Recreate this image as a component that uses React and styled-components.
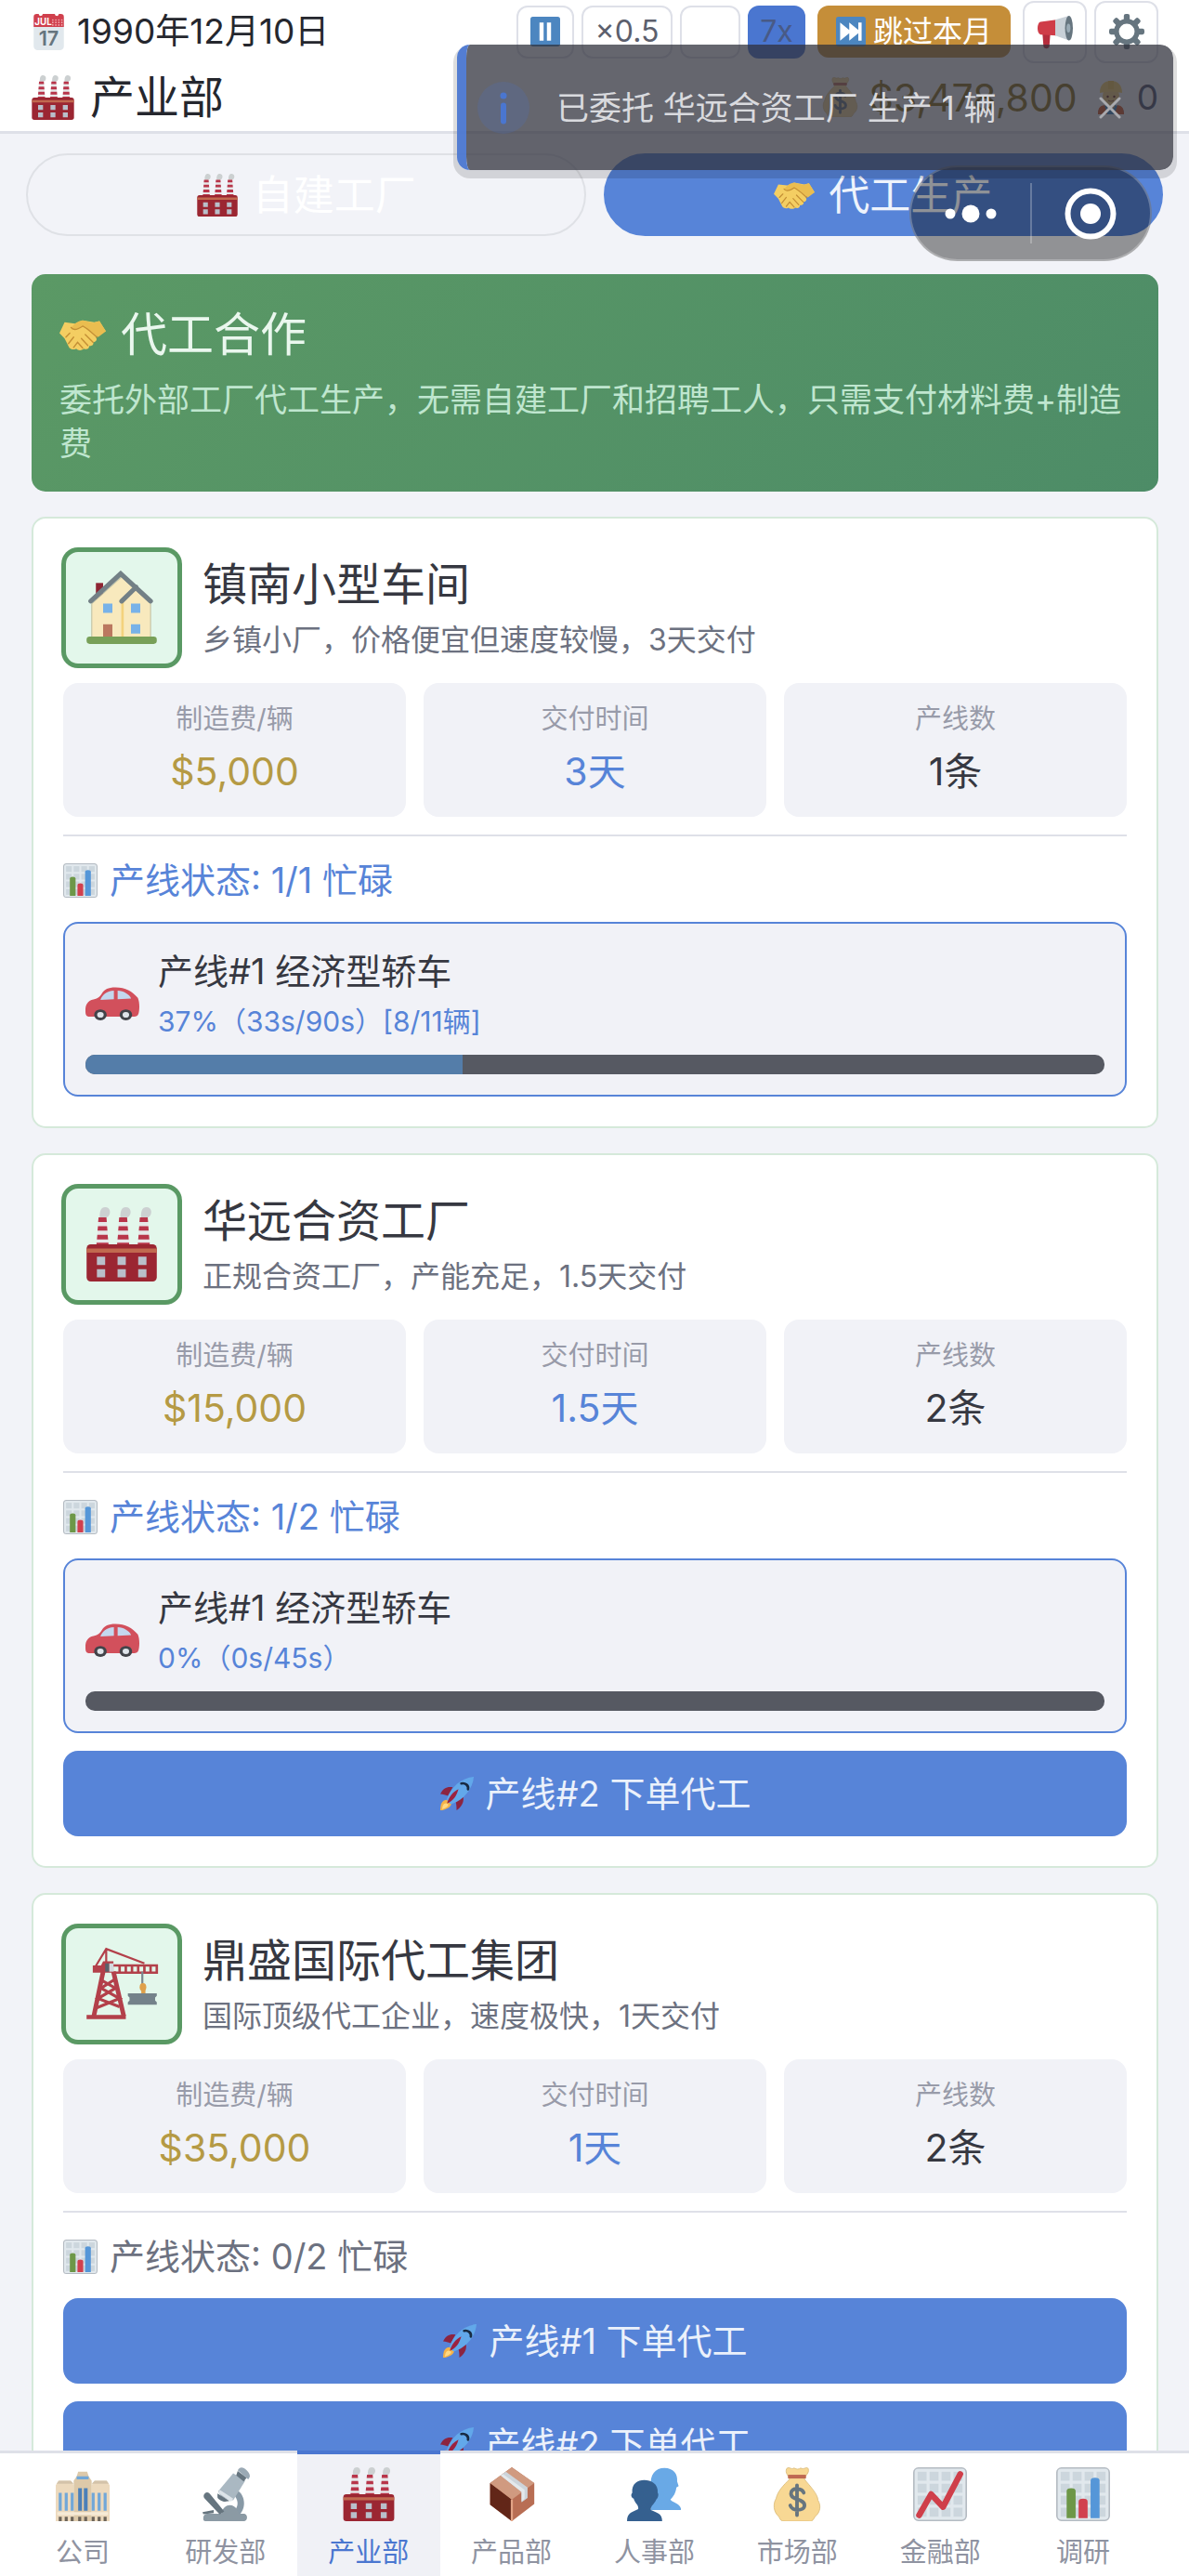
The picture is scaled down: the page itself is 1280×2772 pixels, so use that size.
import React from "react";
import styled, { createGlobalStyle } from "styled-components";

const GlobalStyle = createGlobalStyle`
  * { box-sizing: border-box; }
  body { margin: 0; background: #f2f3f8; }
  body, button {
    font-family: Inter, "Noto Sans CJK SC", sans-serif;
    font-weight: 400;
  }
  h1, h2, p, dl, dt, dd { margin: 0; font-weight: 400; }
  button { cursor: pointer; }
`;

const color = {
  ink: "#25272e",
  heading: "#363841",
  muted: "#6c7180",
  faint: "#989ba9",
  line: "#dee0e8",
  blue: "#5784d8",
  deepBlue: "#4a76d0",
  green: "#5a9964",
  gold: "#b59a44",
  panel: "#f1f2f7",
  white: "#ffffff",
};

/* ---------- icons ---------- */

const Svg = styled.svg`
  display: block;
  flex: none;
  width: ${(p) => p.$size}px;
  height: ${(p) => p.$size}px;
`;

const art = {
  calendar: (
    <>
      <path d="M3 11h30v21a4 4 0 0 1-4 4H7a4 4 0 0 1-4-4z" fill="#e1e8ed" />
      <path d="M3 3a3 3 0 0 1 3-3h2a2 2 0 0 0 4 0h12a2 2 0 0 0 4 0h2a3 3 0 0 1 3 3v10H3z" fill="#d0404d" />
      <text x="4" y="11" fontSize="9" fontWeight="700" fill="#fff" fontFamily="Inter, sans-serif">JUL</text>
      <g fill="#f0a9ae">
        {[22, 25, 28, 31].map((x) => [6, 8.5, 11].map((y) => <circle key={x + "-" + y} cx={x} cy={y} r=".8" />))}
      </g>
      <text x="18" y="31" fontSize="20" fontWeight="600" textAnchor="middle" fill="#66757f" fontFamily="Inter, sans-serif">17</text>
    </>
  ),
  factory: (
    <>
      {[6, 16, 26].map((x) => (
        <g key={x}>
          <path d={`M${x + 1.5} 6C${x + 1} 2 ${x + 2} 0 ${x + 4} 0c2.5 0 3 3 1.500 4.500-1 .8-2 .5-2.300 1.800z`} fill="#ccd0d1" />
          <path d={`M${x + 0.8} 5h3.800l1.100 14h-6z`} fill="#e6e7e8" />
          <path d={`M${x + 0.8} 5h3.800l.2 2.200h-4.200zM${x + 0.5} 9.200h4.400l.2 2.200h-4.800zM${x + 0.2} 13.400h5l.2 2.200h-5.400zM${x - 0.2} 17.200h5.800v2h-5.800z`} fill="#b8354a" />
        </g>
      ))}
      <path d="M1 20a2 2 0 0 1 2-2h30a2 2 0 0 1 2 2v14a2 2 0 0 1-2 2H3a2 2 0 0 1-2-2z" fill="#9b2632" />
      <path d="M1 20h34v2H1z" fill="#c1694f" />
      <path d="M6 24h4v4H6zM16 24h4v4h-4zM26 24h4v4h-4zM6 30h4v4H6zM16 30h4v4h-4zM26 30h4v4h-4z" fill="#b9bfca" />
    </>
  ),
  pause: (
    <>
      <rect width="36" height="36" rx="3" fill="#4c86c0" />
      <path d="M11 7h5v22h-5zM20 7h5v22h-5z" fill="#fff" />
    </>
  ),
  skip: (
    <>
      <rect width="36" height="36" rx="3" fill="#4c86c0" />
      <path d="M5 7l11 9V7l11 9V7h4v22h-4v-9l-11 9v-9L5 29z" fill="#fff" />
    </>
  ),
  horn: (
    <>
      <path d="M5 20h8l-1 13c0 3-6 3-6 0z" fill="#b52d3d" />
      <path d="M3 8l16-2v16L3 21c-4-1-4-12 0-13z" fill="#cf3c48" />
      <path d="M18 6L32 2v25l-14-5z" fill="#c8d0d7" />
      <ellipse cx="32" cy="14.500" rx="4" ry="12.500" fill="#66757f" />
      <ellipse cx="31.500" cy="14.500" rx="2" ry="4.500" fill="#99aab5" />
    </>
  ),
  gear: (
    <>
      <g fill="#66757f">
        {[0, 45, 90, 135, 180, 225, 270, 315].map((a) => (
          <rect key={a} x="15" y="0" width="6" height="9" rx="2" transform={`rotate(${a} 18 18)`} />
        ))}
      </g>
      <circle cx="18" cy="18" r="10.500" fill="none" stroke="#66757f" strokeWidth="5" />
    </>
  ),
  money: (
    <>
      <path d="M11 1c2-2 3 1 5-.5 2 1 3 1 4.500 0 2 1.500 4-1.500 5 .5 1 3-2 4-2.500 7 4 5 9 10 9 14 2 3 2 8-2 11-2 4-3 3-5 3H11c-3 0-4 0-5-3-4-3-4-9-2-12 1-5 5-9 9-13-1-3-3-4-2-7z" fill="#f8d894" stroke="#d8b978" strokeWidth=".5" />
      <path d="M12 5h12v2.500H12z" fill="#bf6952" />
      <path d="M22.500 17c-1-3-8.500-4-8.500.5 0 5 9 3 9 8 0 4-8.500 4-9.500 0M18 12v20" fill="none" stroke="#67757f" strokeWidth="2.400" strokeLinecap="round" />
    </>
  ),
  worker: (
    <>
      <path d="M4 36c0-8 5-10 14-10s14 2 14 10z" fill="#3b88c3" />
      <path d="M4 36c0-8 3-9 7-10l3 10zM32 36c0-8-3-9-7-10l-3 10z" fill="#dd551f" />
      <path d="M14 22h8v6c-2 3-6 3-8 0z" fill="#eabb77" />
      <ellipse cx="18" cy="16" rx="9" ry="10" fill="#f7ce76" />
      <path d="M6 13C6 4 11 0 18 0s12 4 12 13c-8-2-16-2-24 0z" fill="#ffd566" />
      <path d="M15 0h6v9h-6z" fill="#f5c850" />
      <circle cx="14.500" cy="17" r="1.200" fill="#662113" />
      <circle cx="21.500" cy="17" r="1.200" fill="#662113" />
      <path d="M15 21q3 2 6 0" fill="none" stroke="#92533e" strokeWidth="1.200" />
    </>
  ),
  handshake: (
    <>
      <path d="M4 8.500L0 17l4 4 3 6c1 3 5 3 6 2 2 2 5 1 6 0 2 1 4 0 4-2 2 0 4-1 3-3 2 0 4-2 2-4l4-4 4-.5-5-8-4 1-9-1.500-6 2.500z" fill="#f4ce62" />
      <path d="M36 15.500L31 7.500l-5 1.500-8-2c-3 0-7 3-9 6 2 2 5 1 9-1.500 5 2 9 6 12 8.500z" fill="#eabd50" />
      <path d="M9 12.500c2 3 6 1 9-1 4 2 8 6 11 8.500M20 18l6 6M17 21l5 5.500M14 24l4 4.500M5 20l3-3M7 25l4-5M11 28l3-4" fill="none" stroke="#c48f35" strokeWidth="1" strokeLinecap="round" />
    </>
  ),
  house: (
    <>
      <path d="M5.500 6h3.500v8H5.500z" fill="#8e2532" />
      <path d="M3.500 16L18 3l14 13v16.500h-28.500z" fill="#f8e9bd" stroke="#c2c3a5" strokeWidth=".5" />
      <path d="M17.800 14h1.200v18h-1.200z" fill="#f3d27d" />
      <path d="M3 14.800L17.500 1.500 32 14.800M18 14.800l7-6.800" fill="none" stroke="#738086" strokeWidth="2.300" strokeLinecap="round" />
      <path d="M9 16h4.500v4.500H9zM22.500 16h4.500v4.500h-4.500zM22.500 26h4.500v4.500h-4.500z" fill="#78b2e8" />
      <path d="M9 26h4.500v7H9z" fill="#bb785f" />
      <rect x="1" y="32" width="34" height="3.500" rx="1.500" fill="#78a058" />
    </>
  ),
  bars: (
    <>
      <rect x=".5" y=".5" width="35" height="35" rx="3" fill="#e1e8ed" stroke="#b4bbc2" />
      <g fill="#ccd6dd">
        {[3, 11, 19, 27].map((x) => [3, 11, 19, 27].map((y) => <rect key={x + "-" + y} x={x} y={y} width="6" height="6" />))}
      </g>
      <path d="M7 34V16q0-2 3-2t3 2v18z" fill="#6d9748" />
      <path d="M15 34V23q0-2 3-2t3 2v11z" fill="#d1404e" />
      <path d="M23 34V9q0-2 3-2t3 2v25z" fill="#5596d8" />
    </>
  ),
  trend: (
    <>
      <rect x=".5" y=".5" width="35" height="35" rx="3" fill="#e1e8ed" stroke="#b4bbc2" />
      <g fill="#ccd6dd">
        {[3, 11, 19, 27].map((x) => [3, 11, 19, 27].map((y) => <rect key={x + "-" + y} x={x} y={y} width="6" height="6" />))}
      </g>
      <path d="M4 32l8-14 8 8.500L31.500 4.500" fill="none" stroke="#cf3f4a" strokeWidth="4" strokeLinecap="round" strokeLinejoin="round" />
    </>
  ),
  car: (
    <g transform="translate(0 6) scale(1 .87)">
      <path d="M0 26c0-3 .5-6 4-8 4-1 5-1.500 7-5 2-3 4-4.500 9-4.500 7 0 11 3 15 8 1.500 4 1 10 .5 12-.5 2-1.500 2.500-3 2.500H3c-3 0-3-2-3-5z" fill="#d2505c" />
      <path d="M10 18c1-3 4-7 9-7v6.500zM21.500 11c4 0 8 3 9 6l-9 .5z" fill="#c4d8ef" />
      <circle cx="10" cy="29.500" r="4.200" fill="#42444a" />
      <circle cx="27" cy="29.500" r="4.200" fill="#42444a" />
      <circle cx="10" cy="29.500" r="2.200" fill="#dfe4ea" />
      <circle cx="27" cy="29.500" r="2.200" fill="#dfe4ea" />
    </g>
  ),
  crane: (
    <>
      <g fill="none" stroke="#b3404a">
        <path d="M9 12L4.500 33.500M14 12l5 21.500" strokeWidth="2.200" />
        <path d="M8 16l7 4-8.500 5 10.500 4M15 15.500L8 20l9 5-11 4.500" strokeWidth="1.400" />
        <path d="M5 10l5.500-9L29 8M10.500 1v8" strokeWidth="1" />
        <path d="M14 9h21v3.500H14M17 9v3M20 9v3M23 9v3M26 9v3M29 9v3M32 9v3" strokeWidth="1.200" />
      </g>
      <path d="M4 9h4l1-2h5v5.500H4zM1 33h19v2H1z" fill="#b3404a" />
      <path d="M10 8h2v4h-2z" fill="#59636b" />
      <path d="M12 8h2v4h-2z" fill="#d4d9de" />
      <path d="M28 12v8" stroke="#7a868e" />
      <ellipse cx="28.300" cy="19.500" rx="1.600" ry="2" fill="#dfa04a" />
      <path d="M27.500 20h2v3h-2z" fill="#dfa04a" />
      <path d="M21 22.500h14v1.200l-.8.800v1.500l.8.800V28H21v-1.200l.8-.8v-1.500l-.8-.8z" fill="#74828a" />
    </>
  ),
  rocket: (
    <>
      <path d="M1 35c0-7 2-11 7-11s6 5 2 8c-3 2-6 3-9 3z" fill="#f6b348" />
      <path d="M3 34c0-4 2-7 5-6s1 4-5 6z" fill="#ffd983" />
      <path d="M1 18c3-6 7-8 13-7L9 20c-3-1-5-2-8-2zM18 35c5-3 8-8 7-14l-8 5c1 3 1 6 1 9z" fill="#8c2440" />
      <path d="M36 0C23 1 12 11 8 23c0 3 3 6 6 5C25 24 35 13 36 0z" fill="#62a8ea" />
      <path d="M8 28c2-7 6-12 12-15-2 7-5 12-12 15z" fill="#9b2240" />
      <path d="M23 7c4-1 8 2 7 6" fill="none" stroke="#182b42" strokeWidth="2.600" strokeLinecap="round" />
    </>
  ),
  office: (
    <>
      <path d="M0 12l2-3h8l2 3v24H0zM24 12l2-3h8l2 3v24H24z" fill="#ecd9bd" />
      <path d="M2 9h8l2 2H.5zM26 9h8l1.500 2H24z" fill="#d3c3aa" />
      <path d="M12 36V9l2-3 1-3h6l1 3 2 3v27z" fill="#ddc9a9" />
      <path d="M2 17h2v12H2zM6 17h2v12H6zM10 17h2v12h-2zM24 17h2v12h-2zM28 17h2v12h-2zM32 17h2v12h-2zM14 6h8v2h-8z" fill="#71a7d8" />
      <path d="M15 14h2.500v15H15zM18.800 14h2.500v15h-2.500z" fill="#4a7fb8" />
      <path d="M1 30h34v2H1z" fill="#f6ead6" />
      <path d="M2 33h2v3H2zM6 33h2v3H6zM10 33h2v3h-2zM15 33h2v3h-2zM19 33h2v3h-2zM24 33h2v3h-2zM28 33h2v3h-2zM32 33h2v3h-2z" fill="#6d655a" />
    </>
  ),
  microscope: (
    <>
      <path d="M25 15c7 3 7 15 0 18l-3-2c5-4 5-9 1-13z" fill="#8899a6" />
      <path d="M3 34c0-2 1-3 3-3h9c2-8 10-7 12 0h3c3 0 3 5 0 5H5c-2 0-2-1-2-2z" fill="#8b9aa4" />
      <path d="M4 17.500c1.500-1.500 3-.5 4 1l9 11-3 2L4 21c-1-1-1-2.500 0-3.500zM2.500 30l7.500-1.500v2l-7 .8z" fill="#66757f" />
      <path d="M23 4l8 5-8 13c-4 0-9-2-10-6z" fill="#aab8c2" />
      <path d="M14 15l9 6-1.500 2L13 17z" fill="#dde4e9" />
      <path d="M12.500 17.500l8 5-3 .5c-2 0-5-2-5-3zM26 2.500l6 4.500-2 2.500-5-4z" fill="#66757f" />
      <path d="M26 2c1.500-3 4-2 6 0s3 4 1 6z" fill="#9aa9b4" />
    </>
  ),
  box: (
    <>
      <path d="M3.500 10.500L18 0l15 10.500v14L18 36 3.500 25z" fill="#b86e54" />
      <path d="M3.500 10.500L18 21.500V36L3.500 25z" fill="#622618" />
      <path d="M3.500 10.500L18 0l15 10.500-15 11z" fill="#d09a80" />
      <path d="M10.500 5.500l3.500-2.500L28.500 13.500v7l-4 3v-7z" fill="#cdd4da" />
      <path d="M12 4.500l14.500 10.500v6l-2 2v-6.500L10.500 5.500z" fill="#e4e9ec" />
      <path d="M17.300 21.500h1.400V36h-1.400z" fill="#e2a386" />
    </>
  ),
  people: (
    <>
      <path d="M16 13c-1-8 3-12.500 9-12.500s9 4 8.500 9l1 3-1.500 1c-.5 4-2 6-4 8 1 2 6 2 7 6v1H16z" fill="#69a9e6" />
      <path d="M0 36c0-6 4-6 7.500-8C8 25 5 24 4.500 21c-2-1-2-3-1-4C3 11 7 8.500 11.500 8.500S21 11 20.500 17c1 1 0 4-1 4.500-1 3-4 4-3.500 7 4 2 7.500 2 7.500 7.500z" fill="#35608f" />
    </>
  ),
};

const Icon = ({ name, size }) => (
  <Svg $size={size} viewBox="0 0 36 36" aria-hidden="true">
    {art[name]}
  </Svg>
);

/* ---------- shell and header ---------- */

const Screen = styled.div`
  position: relative;
  display: flex;
  flex-direction: column;
  height: 100vh;
  overflow: hidden;
  color: ${color.ink};
`;

const Header = styled.header`
  flex: none;
  padding: 0 33px;
  background: ${color.white};
  border-bottom: 3px solid ${color.line};
`;

const HeaderRow = styled.div`
  display: flex;
  align-items: center;
  justify-content: space-between;
  height: ${(p) => p.$height}px;
`;

const DateText = styled.div`
  display: flex;
  align-items: center;
  gap: 11px;
  font-size: 37px;
  line-height: 48px;
`;

const Title = styled.h1`
  display: flex;
  align-items: center;
  gap: 16px;
  font-size: 48px;
  line-height: 64px;
`;

const Controls = styled.div`
  display: flex;
  align-items: center;
  gap: 13px;
`;

const ControlGroup = styled.div`
  display: flex;
  align-items: center;
  gap: 8px;
`;

const SpeedButton = styled.button`
  display: flex;
  align-items: center;
  justify-content: center;
  width: ${(p) => p.$width}px;
  height: 57px;
  padding: 0;
  border: 2px solid ${(p) => (p.$active ? color.deepBlue : color.line)};
  border-radius: 12px;
  background: ${(p) => (p.$active ? color.deepBlue : color.white)};
  color: ${(p) => (p.$active ? "#485a86" : "#5c5f6d")};
  font-size: 32px;
  line-height: 40px;
`;

const SkipButton = styled.button`
  display: flex;
  align-items: center;
  justify-content: center;
  gap: 8px;
  width: 208px;
  height: 56px;
  padding: 0;
  border: 0;
  border-radius: 12px;
  background: #c58e39;
  color: ${color.white};
  font-size: 32px;
  line-height: 40px;
`;

const IconButton = styled.button`
  display: flex;
  align-items: center;
  justify-content: center;
  width: 69px;
  height: 67px;
  padding: 0;
  border: 2px solid ${color.line};
  border-radius: 12px;
  background: ${color.white};
`;

const Resources = styled.div`
  display: flex;
  align-items: center;
  gap: 18px;
`;

const Resource = styled.div`
  display: flex;
  align-items: center;
  gap: 10px;
  color: ${(p) => (p.$gold ? "#8c6d10" : "#4b4d66")};
  font-size: ${(p) => (p.$gold ? 41 : 37)}px;
  line-height: 48px;
`;

/* ---------- overlays ---------- */

const Toast = styled.div`
  position: absolute;
  top: 48px;
  right: 17px;
  z-index: 3;
  display: flex;
  align-items: center;
  width: 771px;
  max-width: 90%;
  height: 135px;
  padding: 0 46px 0 12px;
  border-left: 10px solid rgba(74, 118, 208, 0.95);
  border-radius: 14px;
  background: rgba(47, 49, 60, 0.74);
  background-clip: padding-box;
  box-shadow: 0 5px 0 4px rgba(0, 0, 0, 0.13);
  color: #d9dade;
  font-size: 35px;
  line-height: 44px;
`;

const ToastText = styled.p`
  flex: 1;
  margin-left: 29px;
`;

const ToastClose = styled.button`
  width: 44px;
  height: 44px;
  padding: 10px;
  border: 0;
  background: transparent;
  color: #a9aaaf;
`;

const Capsule = styled.div`
  position: absolute;
  top: 178px;
  right: 40px;
  z-index: 2;
  display: flex;
  align-items: center;
  width: 261px;
  height: 103px;
  border: 2px solid rgba(255, 255, 255, 0.25);
  border-radius: 52px;
  background: rgba(0, 0, 0, 0.4);
`;

const CapsuleButton = styled.button`
  display: flex;
  flex: 1;
  align-items: center;
  justify-content: center;
  height: 65px;
  padding: 0;
  border: 0;
  border-left: ${(p) => (p.$divided ? "2px solid rgba(255, 255, 255, 0.25)" : "0")};
  background: transparent;
`;

/* ---------- content ---------- */

const Main = styled.main`
  flex: 1;
  min-height: 0;
  overflow: hidden auto;
  scrollbar-width: none;
  padding: 21px 33px 40px 34px;
`;

const Tabs = styled.div`
  display: flex;
  gap: 19px;
  margin: 0 -5px 41px -6px;
`;

const Tab = styled.button`
  display: flex;
  flex: 1;
  align-items: center;
  justify-content: center;
  gap: 15px;
  height: 89px;
  padding: 0;
  border: 2px solid ${(p) => (p.$active ? color.blue : "#dfe1e6")};
  border-radius: 45px;
  background: ${(p) => (p.$active ? color.blue : "transparent")};
  color: ${(p) => (p.$active ? "#eef3fc" : color.white)};
  font-size: 44px;
  line-height: 56px;
`;

const Stack = styled.div`
  display: flex;
  flex-direction: column;
  gap: 27px;
`;

const Banner = styled.section`
  padding: 32px 30px 28px;
  border-radius: 15px;
  background: linear-gradient(135deg, #5b9965, #4d8c67);
`;

const BannerTitle = styled.h2`
  display: flex;
  align-items: center;
  gap: 16px;
  margin-bottom: 14px;
  color: #eaf7ee;
  font-size: 50px;
  line-height: 66px;
`;

const BannerText = styled.p`
  color: #bfe6cf;
  font-size: 35px;
  line-height: 47px;
`;

const Card = styled.article`
  padding: 33px 32px 32px;
  border: 2px solid #d5e9da;
  border-radius: 15px;
  background: ${color.white};
`;

const CardHead = styled.div`
  display: flex;
  align-items: center;
  gap: 24px;
  height: 126px;
  margin-bottom: 18px;
`;

const Badge = styled.div`
  display: flex;
  flex: none;
  align-items: center;
  justify-content: center;
  width: 126px;
  height: 126px;
  border: 3px solid ${color.green};
  border-radius: 16px;
  background: #e3f7eb;
  box-shadow: 0 0 0 2px ${color.green};
`;

const Name = styled.h2`
  padding-top: 6px;
  color: ${color.heading};
  font-size: 48px;
  line-height: 64px;
`;

const Note = styled.p`
  color: ${color.muted};
  font-size: 32px;
  line-height: 56px;
`;

const Stats = styled.dl`
  display: grid;
  grid-template-columns: repeat(3, 1fr);
  gap: 19px;
  padding-bottom: 19px;
  border-bottom: 2px solid ${color.line};
`;

const Stat = styled.div`
  height: 144px;
  padding-top: 19px;
  border-radius: 16px;
  background: ${color.panel};
  text-align: center;
`;

const StatLabel = styled.dt`
  color: ${color.faint};
  font-size: 29px;
  line-height: 40px;
`;

const StatValue = styled.dd`
  margin-top: 8px;
  color: ${(p) => p.$color};
  font-size: 41px;
  line-height: 56px;
`;

const Status = styled.p`
  display: flex;
  align-items: center;
  gap: 13px;
  padding: 22px 0 20px;
  color: ${(p) => (p.$busy ? color.blue : color.muted)};
  font-size: 38px;
  line-height: 50px;
`;

const Lines = styled.div`
  display: flex;
  flex-direction: column;
  gap: 19px;
`;

const Job = styled.div`
  padding: 22px;
  border: 2px solid ${color.blue};
  border-radius: 16px;
  background: ${color.panel};
`;

const JobHead = styled.div`
  display: flex;
  align-items: center;
  gap: 20px;
  margin-bottom: 11px;
`;

const JobName = styled.p`
  color: ${color.heading};
  font-size: 38px;
  line-height: 58px;
`;

const JobProgress = styled.p`
  color: ${color.blue};
  font-size: 30px;
  line-height: 50px;
`;

const Track = styled.div`
  height: 21px;
  overflow: hidden;
  border-radius: 10px;
  background: #565962;
`;

const Fill = styled.div`
  height: 100%;
  background: #547da9;
`;

const OrderButton = styled.button`
  display: flex;
  align-items: center;
  justify-content: center;
  gap: 13px;
  width: 100%;
  height: 92px;
  padding: 0;
  border: 0;
  border-radius: 16px;
  background: ${color.blue};
  color: #ebf1fb;
  font-size: 38px;
  line-height: 50px;
`;

/* ---------- bottom navigation ---------- */

const Nav = styled.nav`
  display: flex;
  flex: none;
  height: 135px;
  padding: 0 37px 0 12px;
  background: linear-gradient(${color.line} 3px, ${color.white} 3px);
`;

const NavLink = styled.a`
  display: flex;
  flex: 1;
  flex-direction: column;
  align-items: center;
  gap: 14px;
  padding-top: 14px;
  border-top: 4px solid ${(p) => (p.$active ? color.deepBlue : "transparent")};
  background: ${(p) => (p.$active ? "#f0f1f6" : "transparent")};
  background-clip: padding-box;
  color: ${(p) => (p.$active ? color.deepBlue : "#8f93a1")};
  font-size: 29px;
  line-height: 40px;
  text-decoration: none;
`;

/* ---------- data ---------- */

const factories = [
  {
    name: "镇南小型车间",
    note: "乡镇小厂，价格便宜但速度较慢，3天交付",
    icon: "house",
    fee: "$5,000",
    time: "3天",
    count: 1,
    jobs: [{ name: "经济型轿车", text: "37%（33s/90s）[8/11辆]", percent: 37 }],
  },
  {
    name: "华远合资工厂",
    note: "正规合资工厂，产能充足，1.5天交付",
    icon: "factory",
    fee: "$15,000",
    time: "1.5天",
    count: 2,
    jobs: [{ name: "经济型轿车", text: "0%（0s/45s）", percent: 0 }],
  },
  {
    name: "鼎盛国际代工集团",
    note: "国际顶级代工企业，速度极快，1天交付",
    icon: "crane",
    fee: "$35,000",
    time: "1天",
    count: 2,
    jobs: [],
  },
];

const departments = [
  ["公司", "office"],
  ["研发部", "microscope"],
  ["产业部", "factory"],
  ["产品部", "box"],
  ["人事部", "people"],
  ["市场部", "money"],
  ["金融部", "trend"],
  ["调研", "bars"],
];

function FactoryCard({ name, note, icon, fee, time, count, jobs }) {
  const free = Array.from({ length: count - jobs.length }, (_, i) => jobs.length + i + 1);
  return (
    <Card>
      <CardHead>
        <Badge>
          <Icon name={icon} size={80} />
        </Badge>
        <div>
          <Name>{name}</Name>
          <Note>{note}</Note>
        </div>
      </CardHead>
      <Stats>
        <Stat>
          <StatLabel>制造费/辆</StatLabel>
          <StatValue $color={color.gold}>{fee}</StatValue>
        </Stat>
        <Stat>
          <StatLabel>交付时间</StatLabel>
          <StatValue $color={color.blue}>{time}</StatValue>
        </Stat>
        <Stat>
          <StatLabel>产线数</StatLabel>
          <StatValue $color={color.heading}>{count}条</StatValue>
        </Stat>
      </Stats>
      <Status $busy={jobs.length > 0}>
        <Icon name="bars" size={37} />
        产线状态: {jobs.length}/{count} 忙碌
      </Status>
      <Lines>
        {jobs.map((job, i) => (
          <Job key={i}>
            <JobHead>
              <Icon name="car" size={58} />
              <div>
                <JobName>
                  产线#{i + 1} {job.name}
                </JobName>
                <JobProgress>{job.text}</JobProgress>
              </div>
            </JobHead>
            <Track role="progressbar" aria-label={job.name} aria-valuenow={job.percent} aria-valuemin={0} aria-valuemax={100}>
              <Fill style={{ width: `${job.percent}%` }} />
            </Track>
          </Job>
        ))}
        {free.map((n) => (
          <OrderButton key={n} type="button">
            <Icon name="rocket" size={37} />
            产线#{n} 下单代工
          </OrderButton>
        ))}
      </Lines>
    </Card>
  );
}

export default function App() {
  return (
    <Screen>
      <GlobalStyle />
      <Header>
        <HeaderRow $height={68}>
          <DateText>
            <Icon name="calendar" size={39} />
            1990年12月10日
          </DateText>
          <Controls>
            <ControlGroup>
              <SpeedButton type="button" $width={62} aria-label="暂停">
                <Icon name="pause" size={32} />
              </SpeedButton>
              <SpeedButton type="button" $width={98}>×0.5</SpeedButton>
              <SpeedButton type="button" $width={65} aria-label="1x" />
              <SpeedButton type="button" $width={62} $active>7x</SpeedButton>
            </ControlGroup>
            <SkipButton type="button">
              <Icon name="skip" size={32} />
              跳过本月
            </SkipButton>
            <ControlGroup>
              <IconButton type="button" aria-label="公告">
                <Icon name="horn" size={38} />
              </IconButton>
              <IconButton type="button" aria-label="设置">
                <Icon name="gear" size={38} />
              </IconButton>
            </ControlGroup>
          </Controls>
        </HeaderRow>
        <HeaderRow $height={73}>
          <Title>
            <Icon name="factory" size={48} />
            产业部
          </Title>
          <Resources>
            <Resource $gold>
              <Icon name="money" size={43} />
              $3,478,800
            </Resource>
            <Resource>
              <Icon name="worker" size={36} />
              0
            </Resource>
          </Resources>
        </HeaderRow>
      </Header>

      <Main>
        <Tabs>
          <Tab type="button">
            <Icon name="factory" size={46} />
            自建工厂
          </Tab>
          <Tab type="button" $active>
            <Icon name="handshake" size={44} />
            代工生产
          </Tab>
        </Tabs>
        <Stack>
          <Banner>
            <BannerTitle>
              <Icon name="handshake" size={50} />
              代工合作
            </BannerTitle>
            <BannerText>委托外部工厂代工生产，无需自建工厂和招聘工人，只需支付材料费+制造费</BannerText>
          </Banner>
          {factories.map((factory) => (
            <FactoryCard key={factory.name} {...factory} />
          ))}
        </Stack>
      </Main>

      <Nav>
        {departments.map(([label, icon]) => (
          <NavLink key={label} href="#" $active={label === "产业部"}>
            <Icon name={icon} size={58} />
            {label}
          </NavLink>
        ))}
      </Nav>

      <Toast role="status">
        <Svg $size={56} viewBox="0 0 56 56" aria-hidden="true">
          <circle cx="28" cy="28" r="28" fill="#4a76d0" opacity=".18" />
          <circle cx="28" cy="15" r="3.500" fill="#4a76d0" />
          <path d="M28 25.500v17" stroke="#4a76d0" strokeWidth="6" strokeLinecap="round" />
        </Svg>
        <ToastText>已委托 华远合资工厂 生产 1 辆</ToastText>
        <ToastClose type="button" aria-label="关闭">
          <Svg $size={24} viewBox="0 0 24 24" aria-hidden="true">
            <path d="M2 2l20 20M22 2L2 22" stroke="currentColor" strokeWidth="3" strokeLinecap="round" />
          </Svg>
        </ToastClose>
      </Toast>

      <Capsule>
        <CapsuleButton type="button" aria-label="更多">
          <Svg $size={60} viewBox="0 0 60 60" aria-hidden="true">
            <g fill="#fff">
              <circle cx="8" cy="30" r="5.500" />
              <circle cx="30" cy="30" r="9.500" />
              <circle cx="52" cy="30" r="5.500" />
            </g>
          </Svg>
        </CapsuleButton>
        <CapsuleButton type="button" $divided aria-label="退出">
          <Svg $size={56} viewBox="0 0 56 56" aria-hidden="true">
            <circle cx="28" cy="28" r="24.500" fill="none" stroke="#fff" strokeWidth="6" />
            <circle cx="28" cy="28" r="11" fill="#fff" />
          </Svg>
        </CapsuleButton>
      </Capsule>
    </Screen>
  );
}
